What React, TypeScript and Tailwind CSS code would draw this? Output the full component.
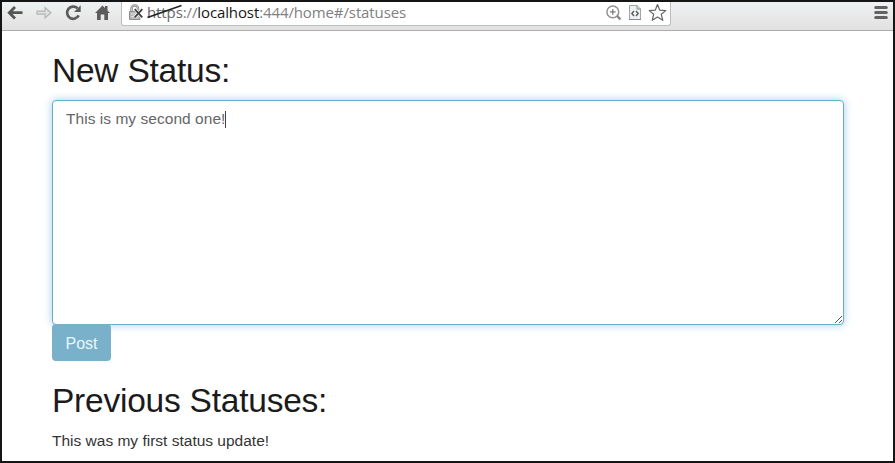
import React from "react";

function NavIcons() {
  return (
    <svg width="119" height="28" viewBox="2 2 119 28" fill="none" className="block shrink-0">
      <path d="M22.5 12.7H10M15 7L9.3 12.7L15 18.4" stroke="#555" strokeWidth="2.8" />
      <path d="M37 11.2H45V7.5L51 12.7L45 18V14.2H37Z" fill="#dedede" stroke="#b5b5b5" strokeWidth="1.2" />
      <path d="M78.7 15.4A6.1 6.1 0 1 1 77.5 8.3" stroke="#5c5c5c" strokeWidth="2.7" />
      <path d="M80.7 5.2V12H74Z" fill="#5c5c5c" />
      <path d="M95 13L102.5 5.5L105 8V6H107.5V10.5L110 13H108V20H104.3V14.5H100.7V20H97V13Z" fill="#5c5c5c" />
    </svg>
  );
}

function InsecureLock() {
  return (
    <svg width="16" height="20" viewBox="128 3 16 20" fill="none" className="block shrink-0">
      <path d="M131.5 12V8.7A3.2 3.2 0 0 1 138 8.7V12" stroke="#888" strokeWidth="2.4" />
      <path d="M131.5 12V8.7A3.2 3.2 0 0 1 138 8.7V12" stroke="#ddd" strokeWidth="0.8" />
      <path d="M129.5 11.5H140V19.5H129.5Z" fill="#bbb" stroke="#8c8c8c" />
      <path d="M131 14H138M131 16.5H138" stroke="#ddd" />
      <path d="M134.7 9.2L142.3 17.3M142.3 9.2L134.7 17.3" stroke="#fff" strokeWidth="3.2" />
      <path d="M134.7 9.2L142.3 17.3M142.3 9.2L134.7 17.3" stroke="#444" strokeWidth="1.9" />
    </svg>
  );
}

function AddressActions() {
  return (
    <svg width="65" height="20" viewBox="604 3 65 20" fill="none" className="block shrink-0">
      <circle cx="612.8" cy="11.9" r="5.9" stroke="#929292" strokeWidth="1.5" />
      <path d="M610 11.9H615.6M612.8 9.1V14.7" stroke="#777" strokeWidth="1.2" />
      <path d="M617 16L620.5 19.3" stroke="#858585" strokeWidth="2.4" />
      <path d="M629.5 5.5H637L640.5 9V19.5H629.5Z" fill="#edf1f3" stroke="#a0a4a6" />
      <path d="M637 5.5V9H640.5M629 19.5H641" stroke="#858989" />
      <path d="M634 11L631.8 13.5L634 16M636 11L638.2 13.5L636 16" stroke="#555" strokeWidth="1.3" />
      <path d="M657.5 4.6L659.8 10.2L665.8 10.6L661.3 14.3L662.8 20.3L657.5 17L652.2 20.3L653.7 14.3L649.2 10.6L655.2 10.2Z" fill="#fff" stroke="#666" strokeWidth="1.2" strokeLinejoin="round" />
    </svg>
  );
}

function BrowserBar() {
  return (
    <header className="flex h-[29px] items-start border-b border-[#adadad] bg-gradient-to-b from-[#edf2f4] via-[#e9e9e9] to-[#e1e1e1]">
      <NavIcons />
      <div className="flex h-[24px] w-[550px] shrink-0 items-start rounded-b-[3px] border border-t-0 border-[#b8bfbd] bg-white pt-px pl-[6px]">
        <InsecureLock />
        <div className="relative -mt-px ml-[3px] h-[20px] w-[457px] whitespace-nowrap font-['Open_Sans',sans-serif] text-[15px] leading-[20px] tracking-[-0.11px] text-[#808080]">
          <span className="text-[#666]">https</span>://<span className="text-[#171717]">localhost</span>:444/home#/statuses
          <svg width="38" height="16" viewBox="0 0 38 16" className="absolute top-[2px] left-0">
            <path d="M0.5 13.5L34.5 1.5" stroke="#222" strokeWidth="1.8" />
          </svg>
        </div>
        <AddressActions />
      </div>
      <svg width="14" height="14" viewBox="0 0 14 14" className="mt-[4px] ml-[203px] shrink-0">
        <path d="M1.7 1.6H12.3M1.7 6.6H12.3M1.7 11.6H12.3" stroke="#626262" strokeWidth="3" strokeLinecap="round" />
      </svg>
    </header>
  );
}

export default function App() {
  return (
    <div className="h-[463px] w-[895px] overflow-hidden border-2 border-[#151515] bg-white font-['Liberation_Sans',Arial,sans-serif] text-[#1b1b1b]">
      <BrowserBar />
      <main className="flex w-[842px] flex-col items-start pl-[50px]">
        <h1 className="mt-[20px] h-[40px] whitespace-nowrap text-[33.5px] leading-[40px] tracking-[-0.23px]">New Status:</h1>
        <div className="relative mt-[9px] flex h-[225px] w-[792px] items-start rounded-[4px] border border-[#66afcd] bg-white pt-[8px] pl-[13px] shadow-[0_0_8px_rgba(102,175,220,0.6)]">
          <span className="whitespace-nowrap text-[15.5px] leading-[20px] tracking-[0.04px] text-[#666]">This is my second one!</span>
          <i className="mt-[2px] h-[17px] w-px bg-[#444]" />
          <svg width="9" height="9" viewBox="0 0 9 9" className="absolute right-0 bottom-0">
            <path d="M1 8L8 1M5 8L8 5" stroke="#555" strokeWidth="1" />
          </svg>
        </div>
        <button className="relative -mt-px h-[37px] w-[59px] rounded-[4px] bg-[#78b1c9] text-center text-[16px] leading-[39px] text-[#e9f7ff]">Post</button>
        <h1 className="mt-[20px] h-[40px] whitespace-nowrap text-[33.5px] leading-[40px] tracking-[-0.23px]">Previous Statuses:</h1>
        <p className="mt-[10px] whitespace-nowrap text-[15.5px] leading-[20px] text-[#333]">This was my first status update!</p>
      </main>
    </div>
  );
}
